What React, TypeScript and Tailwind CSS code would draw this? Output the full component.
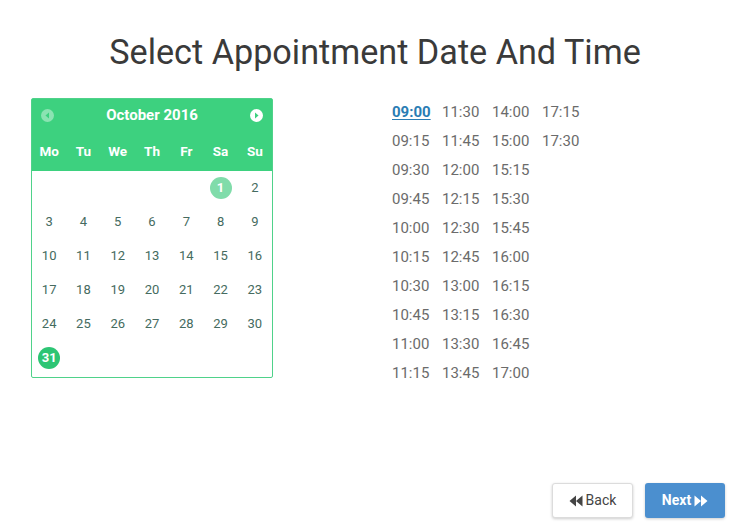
const days: (number | null)[] = [
  null, null, null, null, null, 1, 2,
  3, 4, 5, 6, 7, 8, 9,
  10, 11, 12, 13, 14, 15, 16,
  17, 18, 19, 20, 21, 22, 23,
  24, 25, 26, 27, 28, 29, 30,
  31, null, null, null, null, null, null,
]

const weekdays = ['Mo', 'Tu', 'We', 'Th', 'Fr', 'Sa', 'Su']

const times = [
  '09:00', '09:15', '09:30', '09:45', '10:00', '10:15', '10:30', '10:45', '11:00', '11:15',
  '11:30', '11:45', '12:00', '12:15', '12:30', '12:45', '13:00', '13:15', '13:30', '13:45',
  '14:00', '15:00', '15:15', '15:30', '15:45', '16:00', '16:15', '16:30', '16:45', '17:00',
  '17:15', '17:30',
]

function NavCircle({ dir, faded }: { dir: 'left' | 'right'; faded?: boolean }) {
  return (
    <svg width="13" height="13" viewBox="0 0 14 14" className={faded ? 'opacity-40' : ''}>
      <circle cx="7" cy="7" r="7" fill="#ffffff" />
      {dir === 'left' ? (
        <path d="M8.6 3.8 L4.8 7 L8.6 10.2 Z" fill="#3dd17f" />
      ) : (
        <path d="M5.4 3.8 L9.2 7 L5.4 10.2 Z" fill="#3dd17f" />
      )}
    </svg>
  )
}

function Calendar() {
  return (
    <div className="w-[242px] rounded-[2px] border border-[#4fd28a] bg-white">
      {/* Header */}
      <div className="bg-[#3dd17f] text-white">
        <div className="flex h-[32px] items-center justify-between px-[9px]">
          <NavCircle dir="left" faded />
          <span className="text-[15px] font-bold">October 2016</span>
          <NavCircle dir="right" />
        </div>
        <div className="grid h-[40px] grid-cols-7 items-center">
          {weekdays.map((d) => (
            <span key={d} className="text-center text-[13.5px] font-bold">
              {d}
            </span>
          ))}
        </div>
      </div>

      {/* Days */}
      <div className="grid grid-cols-7 pb-[2px]">
        {days.map((d, i) => (
          <div key={i} className="flex h-[34px] items-center justify-center">
            {d === 1 ? (
              <span className="flex h-[22px] w-[22px] items-center justify-center rounded-full bg-[#80dcaa] text-[13px] font-bold text-white">
                1
              </span>
            ) : d === 31 ? (
              <span className="flex h-[22px] w-[22px] items-center justify-center rounded-full bg-[#2dc574] text-[13px] font-bold text-white">
                31
              </span>
            ) : (
              <span className="text-[13px] text-[#456b60]">{d ?? ''}</span>
            )}
          </div>
        ))}
      </div>
    </div>
  )
}

function Times() {
  return (
    <div className="grid grid-flow-col grid-rows-[repeat(10,29px)] auto-cols-[50px]">
      {times.map((t, i) =>
        i === 0 ? (
          <a key={t} className="flex items-center text-[15px] font-bold text-[#2a7db4] underline underline-offset-2">
            {t}
          </a>
        ) : (
          <span key={t} className="flex items-center text-[15px] text-[#6b6b6b]">
            {t}
          </span>
        )
      )}
    </div>
  )
}

export default function App() {
  return (
    <main
      className="flex h-[530px] w-[756px] flex-col bg-white px-[31px]"
      style={{ fontFamily: 'Roboto, "Liberation Sans", sans-serif' }}
    >
      {/* Title */}
      <h1 className="pr-[6px] pt-[32px] text-center text-[34.2px] leading-[40px] text-[#3a3a3a]">
        Select Appointment Date And Time
      </h1>

      {/* Picker */}
      <div className="mt-[26px] flex flex-1">
        <div className="w-[347px]">
          <Calendar />
        </div>
        <div className="pl-[14px]">
          <Times />
        </div>
      </div>

      {/* Footer */}
      <div className="flex justify-end gap-[12px] pb-[12px]">
        <button className="flex h-[35px] w-[81px] items-center justify-center gap-[3px] rounded-[3px] border border-[#dcdcdc] bg-white text-[14px] text-[#444] shadow-[0_1px_3px_rgba(0,0,0,0.2)]">
          <svg width="14" height="12" viewBox="0 0 14 12">
            <path d="M7 0.5 L0.5 6 L7 11.5 Z M13.5 0.5 L7 6 L13.5 11.5 Z" fill="#444" />
          </svg>
          Back
        </button>
        <button className="flex h-[35px] w-[80px] items-center justify-center gap-[3px] rounded-[3px] bg-[#4b8fcf] text-[14px] font-bold text-white shadow-[0_1px_3px_rgba(0,0,0,0.2)]">
          Next
          <svg width="14" height="12" viewBox="0 0 14 12">
            <path d="M0.5 0.5 L7 6 L0.5 11.5 Z M7 0.5 L13.5 6 L7 11.5 Z" fill="#ffffff" />
          </svg>
        </button>
      </div>
    </main>
  )
}
